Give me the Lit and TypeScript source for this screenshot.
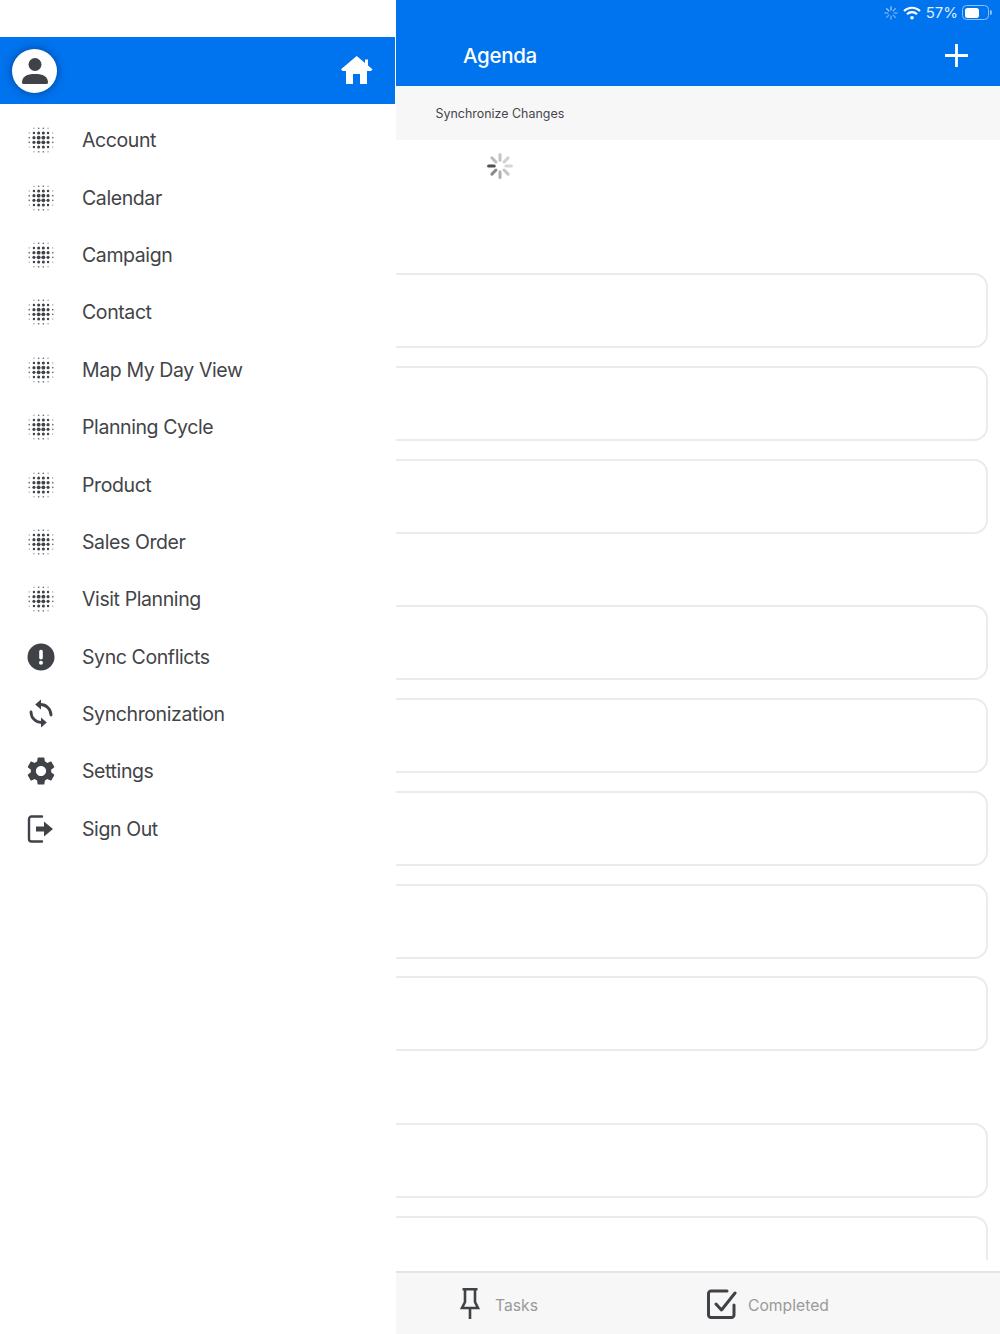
import { LitElement, html, css, svg } from "lit";
import { customElement } from "lit/decorators.js";

const dotIcon = () => {
  const dots = [];
  const steps = [-2.5, -1.5, -0.5, 0.5, 1.5, 2.5];
  for (const r of steps) {
    for (const c of steps) {
      const far = Math.max(Math.abs(r), Math.abs(c));
      const near = Math.min(Math.abs(r), Math.abs(c));
      if (far === 2.5 && near === 2.5) continue;
      let rad = 1.2;
      let op = 1;
      if (far === 0.5) rad = 1.95;
      else if (far === 1.5 && near === 0.5) rad = 1.55;
      else if (far === 1.5) rad = 1.2;
      else if (near === 0.5) { rad = 0.85; op = 0.75; }
      else { rad = 0.65; op = 0.6; }
      dots.push(svg`<circle cx=${14 + c * 4.7} cy=${14 + r * 4.7} r=${rad} fill="#3f4247" opacity=${op}></circle>`);
    }
  }
  return html`<svg width="28" height="28" viewBox="0 0 28 28">${dots}</svg>`;
};

const spinner = (size: number, cols: string[], width: number) => {
  const spokes = cols.map((col, i) => {
    const a = (i * 45 * Math.PI) / 180;
    const c = size / 2;
    const inner = size * 0.22;
    const outer = size * 0.44;
    return svg`<line x1=${c + Math.sin(a) * inner} y1=${c - Math.cos(a) * inner} x2=${c + Math.sin(a) * outer} y2=${c - Math.cos(a) * outer} stroke=${col} stroke-width=${width} stroke-linecap="round"></line>`;
  });
  return html`<svg width=${size} height=${size} viewBox="0 0 ${size} ${size}">${spokes}</svg>`;
};

const alertIcon = html`<svg width="28" height="28" viewBox="0 0 28 28"><circle cx="14" cy="14" r="13.5" fill="#3f4247"></circle><rect x="12.2" y="6.8" width="3.6" height="9.6" rx="1.6" fill="#fff"></rect><circle cx="14" cy="19.8" r="2" fill="#fff"></circle></svg>`;
const syncIcon = html`<svg width="28" height="30" viewBox="0 0 28 30" fill="none" stroke="#3f4247" stroke-width="2.8" stroke-linecap="round"><path d="M13 5.5A10.5 10.5 0 0 1 24 16"></path><path d="M4 13A10.5 10.5 0 0 0 15 23.5"></path><path d="M8.2 5.5 14 0.5V10.5Z" fill="#3f4247" stroke="none"></path><path d="M19.8 23.5 14 18.5V28.5Z" fill="#3f4247" stroke="none"></path></svg>`;
const gearIcon = html`<svg width="34" height="34" viewBox="0 0 24 24" class="gear"><path fill="#3f4247" d="M19.14 12.94c.04-.3.06-.61.06-.94 0-.32-.02-.64-.07-.94l2.03-1.58a.49.49 0 0 0 .12-.61l-1.92-3.32a.488.488 0 0 0-.59-.22l-2.39.96c-.5-.38-1.03-.7-1.62-.94l-.36-2.54a.484.484 0 0 0-.48-.41h-3.84c-.24 0-.43.17-.47.41l-.36 2.54c-.59.24-1.13.57-1.62.94l-2.39-.96c-.22-.08-.47 0-.59.22L2.74 8.87c-.12.21-.08.47.12.61l2.03 1.58c-.05.3-.09.63-.09.94s.02.64.07.94l-2.03 1.58a.49.49 0 0 0-.12.61l1.92 3.32c.12.22.37.29.59.22l2.39-.96c.5.38 1.03.7 1.62.94l.36 2.54c.05.24.24.41.48.41h3.84c.24 0 .44-.17.47-.41l.36-2.54c.59-.24 1.13-.56 1.62-.94l2.39.96c.22.08.47 0 .59-.22l1.92-3.32c.12-.22.07-.47-.12-.61l-2.01-1.58zM12 15.6c-1.98 0-3.6-1.62-3.6-3.6s1.62-3.6 3.6-3.6 3.6 1.62 3.6 3.6-1.62 3.6-3.6 3.6z"></path></svg>`;
const signOutIcon = html`<svg width="28" height="28" viewBox="0 0 28 28" fill="none"><path d="M15 1.5H4.5A2.5 2.5 0 0 0 2 4V24A2.5 2.5 0 0 0 4.5 26.5H15" stroke="#3f4247" stroke-width="2.4" stroke-linecap="round"></path><path d="M9 11.5H17V6.5L26 14L17 21.5V16.5H9Z" fill="#3f4247"></path></svg>`;

const MENU: [string, unknown][] = [
  ["Account", dotIcon()],
  ["Calendar", dotIcon()],
  ["Campaign", dotIcon()],
  ["Contact", dotIcon()],
  ["Map My Day View", dotIcon()],
  ["Planning Cycle", dotIcon()],
  ["Product", dotIcon()],
  ["Sales Order", dotIcon()],
  ["Visit Planning", dotIcon()],
  ["Sync Conflicts", alertIcon],
  ["Synchronization", syncIcon],
  ["Settings", gearIcon],
  ["Sign Out", signOutIcon],
];

const GROUPS = [3, 5, 2];
const LOADER = ["#c4c4c4", "#d0d0d0", "#d6d6d6", "#c4c4c4", "#b0b0b0", "#8a8a8a", "#4f4f4f", "#bdbdbd"];
const STATUS_SPIN = ["#b6d6fb", "#8fc0f8", "#8fc0f8", "#7db5f6", "#7db5f6", "#7db5f6", "#9cc8f9", "#b6d6fb"];

@customElement("app-root")
export class AppRoot extends LitElement {
  static styles = css`
    :host { display: block; width: 1000px; height: 1334px; overflow: hidden; background: #fff; font-family: Inter, "Liberation Sans", sans-serif; color: #3f4247; }
    .page { display: flex; height: 1334px; }
    .side { width: 396px; flex: none; padding-top: 37px; box-sizing: border-box; }
    .side-head { width: 395px; height: 67px; background: #0073ee; display: flex; align-items: center; justify-content: space-between; padding: 0 22px 0 12px; box-sizing: border-box; }
    .avatar { width: 45px; height: 44px; border-radius: 50%; background: #fff; box-shadow: 0 0 8px rgba(0, 30, 80, 0.55); display: flex; align-items: center; justify-content: center; }
    .menu { display: flex; flex-direction: column; padding-top: 7.5px; }
    .item { height: 57.4px; display: flex; align-items: center; font-size: 19.5px; letter-spacing: -0.4px; color: #424448; }
    .ic { width: 82px; flex: none; padding-left: 27px; box-sizing: border-box; display: flex; align-items: center; }
    .gear { margin: -3px; }
    .main { flex: 1; display: flex; flex-direction: column; min-width: 0; height: 1334px; }
    .top { height: 86px; background: #0073ee; color: #fff; flex: none; display: flex; flex-direction: column; padding-right: 8px; box-sizing: border-box; }
    .status { height: 25px; display: flex; align-items: center; justify-content: flex-end; gap: 5px; font-size: 15px; color: #dcebff; flex: none; }
    .battery { display: flex; align-items: center; margin-left: -1px; }
    .battery-body { width: 27px; height: 15px; border: 1px solid #8fc0f8; border-radius: 4.5px; padding: 1.5px; box-sizing: border-box; display: flex; }
    .battery-fill { width: 14px; background: #fff; border-radius: 2.5px; }
    .battery-cap { width: 2px; height: 5px; background: #8fc0f8; border-radius: 0 2px 2px 0; margin-left: 1px; }
    .bar { flex: 1; display: flex; align-items: center; justify-content: space-between; padding: 0 24px 0 67px; }
    .title { font-size: 20.5px; font-weight: 500; letter-spacing: -0.3px; }
    .sub { height: 54px; flex: none; background: #f7f7f7; display: flex; align-items: center; padding-left: 39.5px; font-size: 12.45px; color: #45474b; }
    .scroll { height: 1120px; flex: none; overflow: hidden; display: flex; flex-direction: column; }
    .spin { height: 133px; flex: none; padding: 13px 0 0 91px; box-sizing: border-box; }
    .group { display: flex; flex-direction: column; gap: 17.75px; margin-bottom: 71.8px; flex: none; }
    .card { height: 75px; flex: none; margin: 0 12px 0 -20px; border: 2px solid #ebebeb; border-radius: 14px; box-sizing: border-box; background: #fff; }
    .tabs { margin-top: 11px; flex: 1; background: #f7f7f7; border-top: 2px solid #e4e4e4; display: flex; align-items: center; font-size: 15.7px; color: #9a9a9a; box-sizing: border-box; padding-top: 1px; }
    .tab { display: flex; align-items: center; gap: 11px; }
    .tab span { padding-top: 2px; }
    .tab.one { width: 311px; padding-left: 61.5px; box-sizing: border-box; gap: 13.5px; }
  `;

  render() {
    return html`<div class="page">
      <div class="side">
        <div class="side-head">
          <div class="avatar">
            <svg width="28" height="28" viewBox="0 0 28 28"><circle cx="14" cy="7.5" r="6.5" fill="#3f4247"></circle><path d="M1 25.5C1 19.5 6 17 14 17S27 19.5 27 25.5C27 26.5 26 27 25 27H3C2 27 1 26.5 1 25.5Z" fill="#3f4247"></path></svg>
          </div>
          <svg width="32" height="29" viewBox="0 0 32 29"><path fill="#fff" d="M15.7 0 24 6.9V3.6H27V9.4L31.5 13.2 30 15H26V28H19V18H12V28H5V15H1.4L0 13.2Z"></path></svg>
        </div>
        <div class="menu">
          ${MENU.map(([label, icon]) => html`<div class="item"><span class="ic">${icon}</span><span>${label}</span></div>`)}
        </div>
      </div>
      <div class="main">
        <div class="top">
          <div class="status">
            ${spinner(14, STATUS_SPIN, 1.2)}
            <svg width="18" height="14" viewBox="0 0 18 14" fill="none" stroke="#fff" stroke-width="2.2"><path d="M1 5A11.5 11.5 0 0 1 17 5"></path><path d="M4 8.2A7.2 7.2 0 0 1 14 8.2"></path><circle cx="9" cy="11.8" r="1.8" fill="#fff" stroke="none"></circle></svg>
            <span>57%</span>
            <span class="battery"><span class="battery-body"><span class="battery-fill"></span></span><span class="battery-cap"></span></span>
          </div>
          <div class="bar">
            <span class="title">Agenda</span>
            <svg width="23" height="23" viewBox="0 0 23 23"><path d="M11.5 0V23M0 11.5H23" stroke="#fff" stroke-width="2.8"></path></svg>
          </div>
        </div>
        <div class="sub">Synchronize Changes</div>
        <div class="scroll">
          <div class="spin">${spinner(26, LOADER, 3)}</div>
          ${GROUPS.map((n) => html`<div class="group">${Array.from({ length: n }, () => html`<div class="card"></div>`)}</div>`)}
        </div>
        <div class="tabs">
          <div class="tab one">
            <svg width="24" height="32" viewBox="0 0 24 32" fill="none" stroke="#3f4247" stroke-width="2.6"><path d="M4.5 1.3H19.5M7 1.3V14L4 20H20L17 14V1.3M12 20V31"></path></svg>
            <span>Tasks</span>
          </div>
          <div class="tab">
            <svg width="30" height="30" viewBox="0 0 30 30" fill="none" stroke="#3f4247" stroke-width="3" stroke-linecap="round" stroke-linejoin="round"><path d="M20 2H4A2.5 2.5 0 0 0 1.5 4.5V26A2.5 2.5 0 0 0 4 28.5H24.5A2.5 2.5 0 0 0 27 26V16"></path><path d="M9 15 14.5 21 28 4"></path></svg>
            <span>Completed</span>
          </div>
        </div>
      </div>
    </div>`;
  }
}
